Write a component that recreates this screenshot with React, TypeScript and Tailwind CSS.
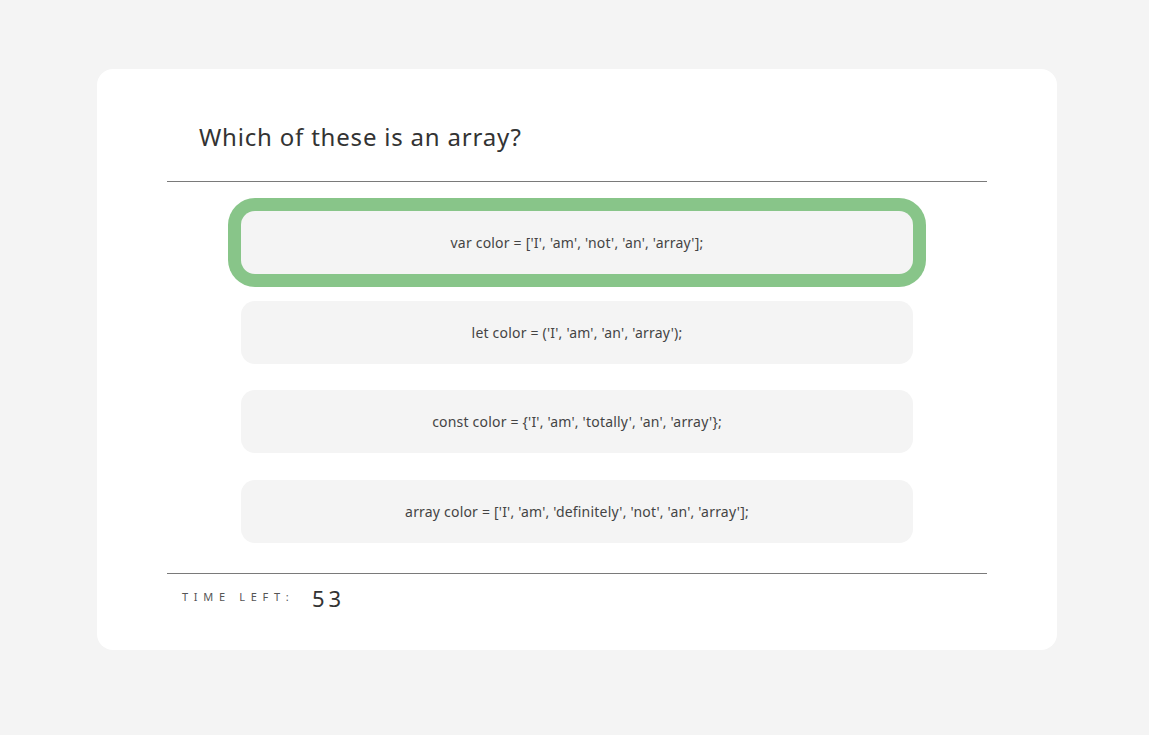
import React, { useEffect, useState } from 'react';

const answers: string[] = [
  "var color = ['I', 'am', 'not', 'an', 'array'];",
  "let color = ('I', 'am', 'an', 'array');",
  "const color = {'I', 'am', 'totally', 'an', 'array'};",
  "array color = ['I', 'am', 'definitely', 'not', 'an', 'array'];",
];

const App = () => {
  const [selected, setSelected] = useState<number>(0);
  const [timeLeft] = useState<number>(53);

  useEffect(() => {
    document.body.style.background = '#f4f4f4';
  }, []);

  return (
    <div
      className="min-h-[735px] w-full bg-[#f4f4f4] pt-[69px] pl-[97px]"
      style={{ fontFamily: '"Noto Sans", "Open Sans", sans-serif' }}
    >
      <div className="w-[960px] h-[581px] bg-white rounded-[16px] px-[70px] pt-[50px]">
        <h1 className="pl-[32px] h-[36px] text-[24px] leading-[36px] tracking-[0.8px] text-[#333] font-normal">
          Which of these is an array?
        </h1>
        <div className="mt-[26px] h-px bg-[#7a7a7a]" />

        <div className="flex flex-col items-center gap-[26.5px] pt-[29px] pb-[30px]">
          {answers.map((a, i) => (
            <button
              key={i}
              type="button"
              onClick={() => setSelected(i)}
              className={`w-[672px] h-[63px] shrink-0 rounded-[14px] bg-[#f4f4f4] text-[14px] tracking-[0.2px] text-[#444] ${
                selected === i ? 'shadow-[0_0_0_13px_#88c589]' : ''
              }`}
            >
              {a}
            </button>
          ))}
        </div>

        <div className="h-px bg-[#7a7a7a]" />
        <div className="flex items-center pl-[15px] pt-[10px]">
          <span className="text-[11px] tracking-[5.7px] text-[#555] w-[130px]">TIME LEFT:</span>
          <span className="text-[22px] tracking-[4px] text-[#333] leading-[28px]">{timeLeft}</span>
        </div>
      </div>
    </div>
  );
};

export default App;
